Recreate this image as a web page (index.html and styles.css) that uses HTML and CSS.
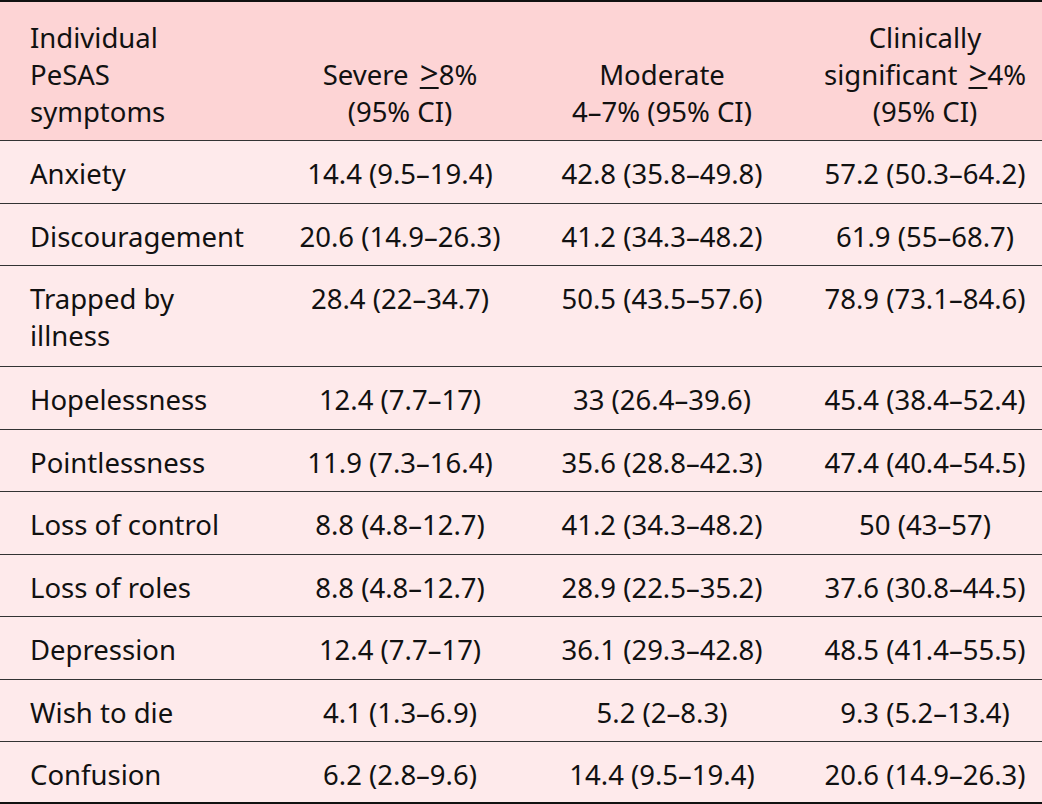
FILE: index.html
```html
<!DOCTYPE html>
<html>
<head>
<meta charset="utf-8">
<link rel="stylesheet" href="styles.css">
</head>
<body>
<table class="tbl">
  <colgroup>
    <col class="c1"><col class="c2"><col class="c3"><col class="c4">
  </colgroup>
  <thead>
    <tr>
      <th class="first">Individual<br>PeSAS<br>symptoms</th>
      <th>Severe <span class="ge">&gt;</span>8%<br>(95% CI)</th>
      <th>Moderate<br>4–7% (95% CI)</th>
      <th>Clinically<br>significant <span class="ge">&gt;</span>4%<br>(95% CI)</th>
    </tr>
  </thead>
  <tbody>
    <tr><td class="first">Anxiety</td><td>14.4 (9.5–19.4)</td><td>42.8 (35.8–49.8)</td><td>57.2 (50.3–64.2)</td></tr>
    <tr><td class="first">Discouragement</td><td>20.6 (14.9–26.3)</td><td>41.2 (34.3–48.2)</td><td>61.9 (55–68.7)</td></tr>
    <tr class="tall"><td class="first">Trapped by<br>illness</td><td>28.4 (22–34.7)</td><td>50.5 (43.5–57.6)</td><td>78.9 (73.1–84.6)</td></tr>
    <tr><td class="first">Hopelessness</td><td>12.4 (7.7–17)</td><td>33 (26.4–39.6)</td><td>45.4 (38.4–52.4)</td></tr>
    <tr><td class="first">Pointlessness</td><td>11.9 (7.3–16.4)</td><td>35.6 (28.8–42.3)</td><td>47.4 (40.4–54.5)</td></tr>
    <tr><td class="first">Loss of control</td><td>8.8 (4.8–12.7)</td><td>41.2 (34.3–48.2)</td><td>50 (43–57)</td></tr>
    <tr><td class="first">Loss of roles</td><td>8.8 (4.8–12.7)</td><td>28.9 (22.5–35.2)</td><td>37.6 (30.8–44.5)</td></tr>
    <tr><td class="first">Depression</td><td>12.4 (7.7–17)</td><td>36.1 (29.3–42.8)</td><td>48.5 (41.4–55.5)</td></tr>
    <tr><td class="first">Wish to die</td><td>4.1 (1.3–6.9)</td><td>5.2 (2–8.3)</td><td>9.3 (5.2–13.4)</td></tr>
    <tr><td class="first">Confusion</td><td>6.2 (2.8–9.6)</td><td>14.4 (9.5–19.4)</td><td>20.6 (14.9–26.3)</td></tr>
  </tbody>
</table>
</body>
</html>
```
FILE: styles.css
```css
html, body {
  margin: 0;
  padding: 0;
  background: #ffffff;
}
.tbl {
  width: 1042px;
  border-collapse: collapse;
  table-layout: fixed;
  font-family: "Noto Sans", sans-serif;
  font-size: 27.5px;
  line-height: 37px;
  color: #111111;
  border-top: 2px solid #111111;
  border-bottom: 2px solid #111111;
}
.c1 { width: 272px; }
.c2 { width: 256px; }
.c3 { width: 268px; }
.c4 { width: 246px; }
.tbl th {
  background: #fdd4d5;
  font-weight: normal;
  text-align: center;
  vertical-align: bottom;
  padding: 17px 0 10px 0;
  border-bottom: 1px solid #333333;
}
.tbl td {
  background: #feeaeb;
  text-align: center;
  vertical-align: top;
  padding: 14px 0 10.5px 0;
  border-bottom: 1px solid #333333;
}
.tbl tr.tall td {
  padding-bottom: 12px;
}
.tbl tbody tr:last-child td {
  border-bottom: none;
  padding-bottom: 8.5px;
}
.tbl .first {
  text-align: left;
  padding-left: 30px;
}
.tbl th:last-child, .tbl td:last-child {
  padding-left: 12px;
}
.ge {
  margin-left: 4px;
  font-size: 1.2em;
  line-height: 0;
  text-decoration: underline;
  text-decoration-thickness: 2px;
  text-underline-offset: 2px;
}
```
